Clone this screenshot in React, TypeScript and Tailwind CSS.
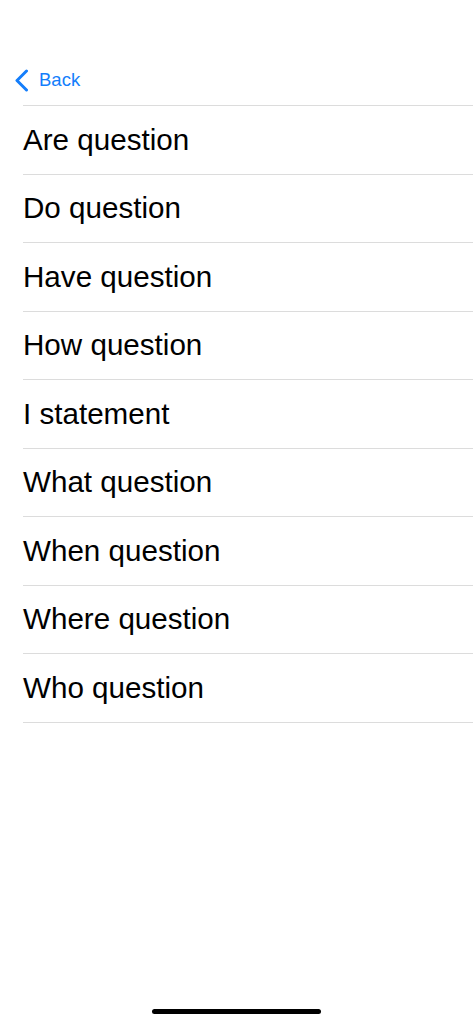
const items = [
    'Are question',
    'Do question',
    'Have question',
    'How question',
    'I statement',
    'What question',
    'When question',
    'Where question',
    'Who question',
]

const App = () => {
    return (
        <div
            className="relative h-[1024px] w-full bg-white overflow-hidden"
            style={{ fontFamily: '"Liberation Sans", Arial, sans-serif' }}
        >
            {/* nav bar */}
            <div className="flex h-[47px] mt-[58px] items-center pl-[14px] pb-[3px]">
                <button className="flex items-center gap-[10px] text-[#147efb]">
                    <svg
                        width="15"
                        height="23"
                        viewBox="0 0 15 23"
                        fill="none"
                        stroke="currentColor"
                        strokeWidth="3"
                        strokeLinecap="round"
                        strokeLinejoin="round"
                    >
                        <path d="M12.5 2 L3 11.5 L12.5 21" />
                    </svg>
                    <span className="text-[18.5px] leading-none">Back</span>
                </button>
            </div>

            {/* list */}
            <ul className="ml-[23px] border-t border-[#dcdcdc]">
                {items.map(item => (
                    <li
                        key={item}
                        className="flex h-[68.5px] items-center border-b border-[#dcdcdc] text-[29.6px] text-black"
                    >
                        {item}
                    </li>
                ))}
            </ul>

            {/* home indicator */}
            <div className="absolute left-[152px] top-[1009px] h-[5px] w-[169px] rounded-full bg-black" />
        </div>
    )
}

export default App
